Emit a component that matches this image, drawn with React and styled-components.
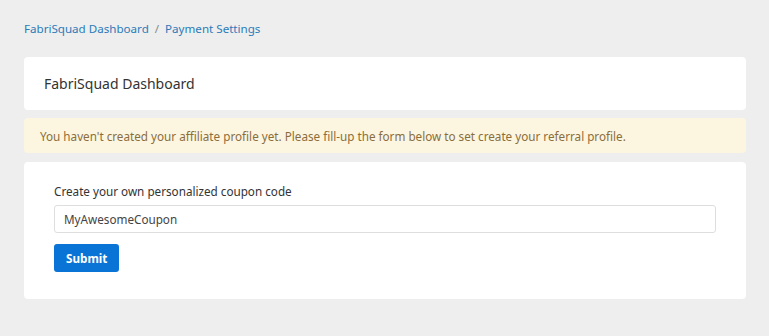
import React from "react";
import styled, { createGlobalStyle } from "styled-components";

const GlobalStyle = createGlobalStyle`
  html, body {
    margin: 0;
    padding: 0;
    background: #eeeeee;
  }
  body {
    font-family: "Noto Sans", "Open Sans", sans-serif;
    color: #333;
  }
  * {
    box-sizing: border-box;
  }
`;

export default function App() {
  return (
    <>
      <GlobalStyle />
      <Page>
        <Breadcrumb>
          <Crumb href="#">FabriSquad Dashboard</Crumb>
          <Separator>/</Separator>
          <Crumb href="#">Payment Settings</Crumb>
        </Breadcrumb>

        <HeaderCard>
          <Title>FabriSquad Dashboard</Title>
        </HeaderCard>

        <Alert>
          You haven't created your affiliate profile yet. Please fill-up the form below to set create your referral profile.
        </Alert>

        <FormCard>
          <Label htmlFor="coupon">Create your own personalized coupon code</Label>
          <Input id="coupon" defaultValue="MyAwesomeCoupon" />
          <SubmitButton type="button">Submit</SubmitButton>
        </FormCard>
      </Page>
    </>
  );
}

const Page = styled.div`
  min-height: 336px;
  padding: 18px 23px 20px 24px;
  display: flex;
  flex-direction: column;
`;

const Breadcrumb = styled.nav`
  display: flex;
  align-items: center;
  gap: 6px;
  font-size: 11.6px;
  height: 20px;
  margin-bottom: 19px;
`;

const Crumb = styled.a`
  color: #2b7bb9;
  text-decoration: none;
`;

const Separator = styled.span`
  color: #888;
`;

const HeaderCard = styled.div`
  background: #fff;
  border-radius: 4px;
  height: 53px;
  display: flex;
  align-items: center;
  padding: 0 20px;
  margin-bottom: 8px;
`;

const Title = styled.h1`
  margin: 0;
  font-size: 14px;
  font-weight: 400;
  color: #333;
`;

const Alert = styled.div`
  background: #fcf6e1;
  color: #8a6d3b;
  border-radius: 4px;
  height: 35px;
  display: flex;
  align-items: center;
  padding: 0 16px;
  font-size: 11.7px;
  margin-bottom: 9px;
`;

const FormCard = styled.div`
  background: #fff;
  border-radius: 4px;
  padding: 21px 30px 27px;
  display: flex;
  flex-direction: column;
  align-items: flex-start;
`;

const Label = styled.label`
  font-size: 11.7px;
  color: #333;
  margin-bottom: 6px;
`;

const Input = styled.input`
  width: 100%;
  height: 28px;
  border: 1px solid #dedede;
  border-radius: 3px;
  padding: 0 9px;
  font-family: inherit;
  font-size: 11.7px;
  color: #444;
  margin-bottom: 11px;
  outline: none;
`;

const SubmitButton = styled.button`
  background: #0a74d6;
  color: #fff;
  border: none;
  border-radius: 3px;
  height: 28px;
  padding: 0 12px;
  font-family: inherit;
  font-size: 11.7px;
  font-weight: 700;
  cursor: pointer;
`;
